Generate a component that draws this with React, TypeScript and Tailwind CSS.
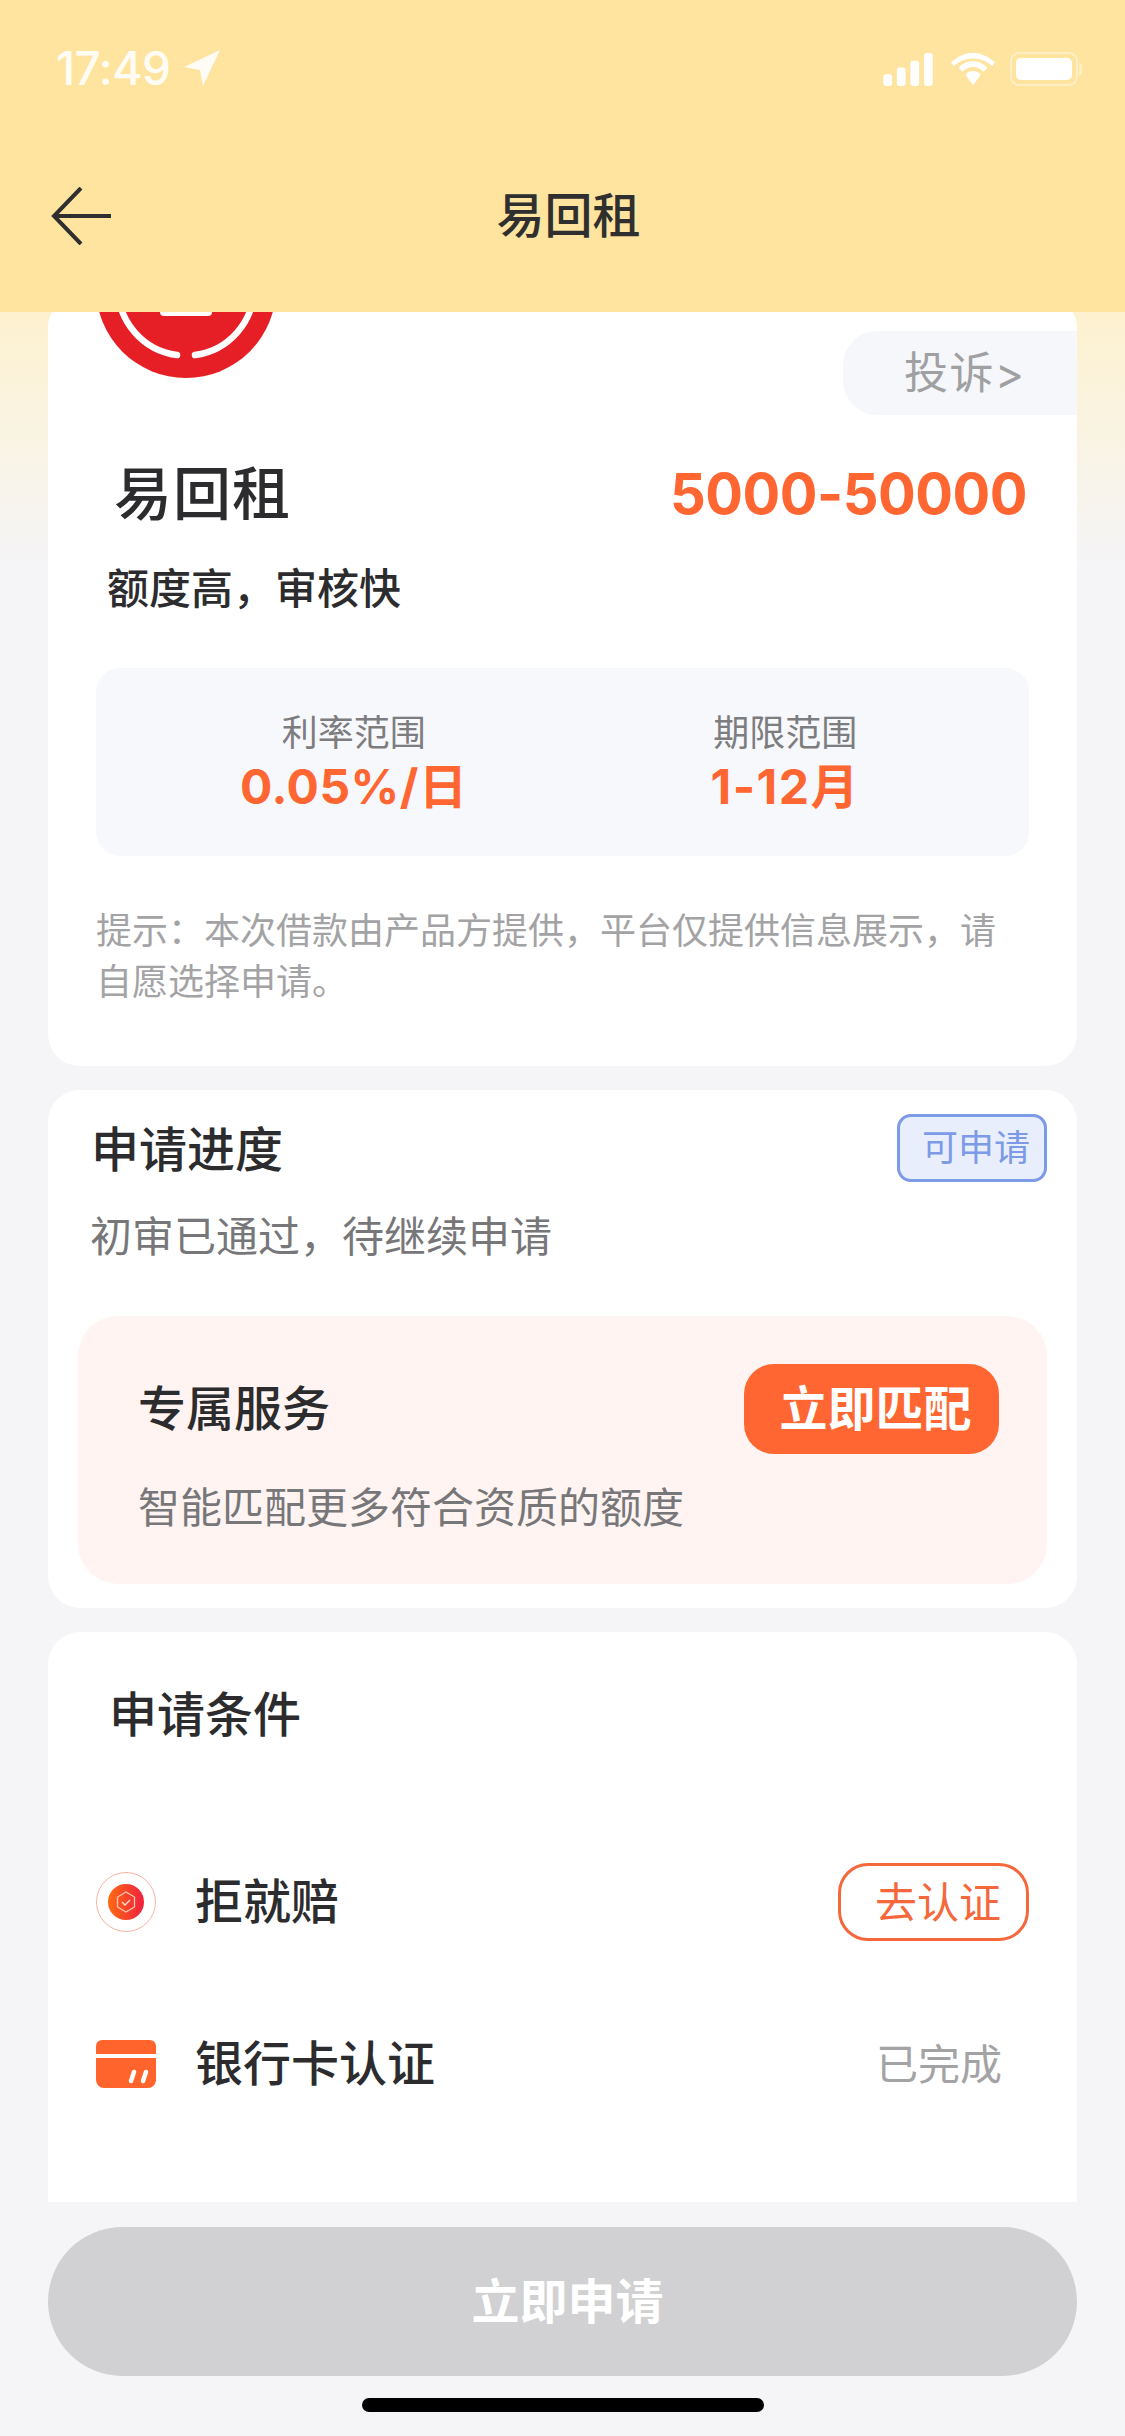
import React from "react";

const FONT = "font-['Inter','Noto_Sans_CJK_SC',sans-serif]";

function StatusBar() {
  return (
    <div className="flex h-[130px] items-start justify-between pl-[56px] pr-[43px] pt-[44px]">
      <div className="flex items-center gap-[13px]">
        <span className="text-[46px] leading-[48px] font-medium tracking-[-0.5px] text-white/90">17:49</span>
        <svg width="38" height="38" viewBox="0 0 36 36" className="text-white/90">
          <path d="M35 1 L1 17 L16 20 L19 35 Z" fill="currentColor" />
        </svg>
      </div>
      <div className="flex items-center gap-[15px] pt-[8px] text-white">
        <svg width="55" height="33" viewBox="0 0 52 34" fill="currentColor">
          <rect x="0" y="22" width="9" height="12" rx="2.5" />
          <rect x="14" y="15" width="9" height="19" rx="2.5" />
          <rect x="28" y="8" width="9" height="26" rx="2.5" />
          <rect x="42" y="0" width="9" height="34" rx="2.5" />
        </svg>
        <svg width="44" height="34" viewBox="0 0 46 34" fill="currentColor">
          <path d="M23 6 C31 6 38 9 43 14 L46 10 C39 4 31 0 23 0 C15 0 7 4 0 10 L3 14 C8 9 15 6 23 6 Z" />
          <path d="M23 15 C27 15 31 17 34 20 L38 16 C34 11 29 9 23 9 C17 9 12 11 8 16 L12 20 C15 17 19 15 23 15 Z" />
          <path d="M23 19 C20 19 17 20 15 23 L23 34 L31 23 C29 20 26 19 23 19 Z" />
        </svg>
        <div className="flex items-center">
          <div className="flex h-[34px] w-[68px] items-center rounded-[9px] border-2 border-white/40 p-[4px]">
            <div className="h-full w-full rounded-[5px] bg-white" />
          </div>
          <div className="ml-[1px] h-[12px] w-[3px] rounded-r-full bg-white/40" />
        </div>
      </div>
    </div>
  );
}

function NavBar() {
  return (
    <div className="relative flex h-[182px] items-start justify-center pl-[12px] pt-[54px]">
      <svg
        width="60"
        height="58"
        viewBox="0 0 60 58"
        fill="none"
        stroke="#2f2f2f"
        strokeWidth="4"
        className="absolute left-[51px] top-[57px]"
      >
        <path d="M30 1 L3 29 L30 57" />
        <path d="M3 29 H60" />
      </svg>
      <span className="text-[48px] leading-[64px] font-medium text-[#2f2f2f]">易回租</span>
    </div>
  );
}

function BrandLogo() {
  return (
    <svg width="180" height="180" viewBox="0 0 180 180">
      <circle cx="90" cy="90" r="90" fill="#e61f26" />
      <path
        d="M81 157 A68 68 0 0 1 22 90 M99 157 A68 68 0 0 0 158 90"
        fill="none"
        stroke="#ffffff"
        strokeWidth="6.5"
        strokeLinecap="round"
      />
      <rect x="64" y="40" width="52" height="78" rx="4" fill="#ffffff" />
    </svg>
  );
}

function ProductCard() {
  return (
    <section className="relative overflow-hidden rounded-b-[32px] rounded-t-[24px] bg-white pb-[58px]">
      <div className="flex h-[155px] items-start pl-[48px]">
        <div className="-mt-[104px]">
          <BrandLogo />
        </div>
      </div>
      <div className="absolute right-0 top-[29px] flex h-[84px] w-[234px] items-center rounded-l-[34px] bg-[#f6f7fb] pl-[61px] text-[44px] tracking-[1.5px] text-[#a0a0a2]">
        投诉&gt;
      </div>
      <div className="mt-[-5px] flex items-center justify-between pl-[66px] pr-[50px]">
        <h2 className="text-[58px] leading-[84px] font-medium tracking-[1px] text-[#2c2c2e]">易回租</h2>
        <span className="text-[56px] leading-[84px] font-bold tracking-[-0.5px] text-[#ff6632]">5000-50000</span>
      </div>
      <p className="mt-[23px] pl-[59px] text-[42px] leading-[60px] font-medium text-[#2c2c2e]">额度高，审核快</p>
      <div className="mx-[48px] mt-[49px] grid h-[188px] grid-cols-2 items-center rounded-[24px] bg-[#f7f8fc] pl-[42px] pr-[28px]">
        <div className="flex flex-col items-center">
          <span className="text-[36px] leading-[50px] text-[#7d7d7f]">利率范围</span>
          <span className="text-[48px] leading-[58px] font-bold tracking-[0.5px] text-[#ff6632]">0.05%/日</span>
        </div>
        <div className="flex flex-col items-center">
          <span className="text-[36px] leading-[50px] text-[#7d7d7f]">期限范围</span>
          <span className="text-[48px] leading-[58px] font-bold tracking-[1.5px] text-[#ff6632]">1-12月</span>
        </div>
      </div>
      <p className="mx-[48px] mt-[50px] text-[36px] leading-[51px] text-[#a3a3a5]">
        提示：本次借款由产品方提供，平台仅提供信息展示，请自愿选择申请。
      </p>
    </section>
  );
}

function ProgressCard() {
  return (
    <section className="relative rounded-[32px] bg-white px-[30px] pb-[24px] pt-[28px]">
      <span className="absolute right-[30px] top-[24px] flex h-[68px] w-[150px] items-center justify-end rounded-[14px] border-[3px] border-[#7c9ae6] bg-[#e8eefc] pr-[14px] text-[36px] text-[#7c9ae6]">
        可申请
      </span>
      <h3 className="pl-[13px] text-[48px] leading-[64px] font-medium text-[#2c2c2e]">申请进度</h3>
      <p className="mt-[25px] pl-[12px] text-[42px] leading-[60px] text-[#77777a]">初审已通过，待继续申请</p>
      <div className="mt-[49px] rounded-[40px] bg-[#fff4f1] pb-[46px] pl-[60px] pr-[48px] pt-[48px]">
        <div className="flex items-center justify-between">
          <span className="text-[48px] leading-[88px] font-medium text-[#2c2c2e]">专属服务</span>
          <span className="flex h-[90px] w-[255px] items-center justify-center rounded-[30px] bg-[#ff6632] pl-[8px] text-[48px] font-bold text-white">
            立即匹配
          </span>
        </div>
        <p className="mt-[24px] text-[42px] leading-[60px] text-[#77777a]">智能匹配更多符合资质的额度</p>
      </div>
    </section>
  );
}

function ShieldBadge() {
  return (
    <svg width="60" height="60" viewBox="0 0 60 60">
      <defs>
        <linearGradient id="badge-fill" x1="0" y1="0" x2="1" y2="0">
          <stop offset="0" stopColor="#ff6a13" />
          <stop offset="1" stopColor="#f0203e" />
        </linearGradient>
      </defs>
      <circle cx="30" cy="30" r="29.5" fill="#fff" stroke="#f6b3a4" strokeWidth="1" />
      <circle cx="30" cy="30" r="18" fill="url(#badge-fill)" />
      <path d="M30 20 L38.5 25 V35 L30 40 L21.5 35 V25 Z" fill="none" stroke="#ffc9b0" strokeWidth="1.3" />
      <path d="M26 30 L29 33 L34 28" fill="none" stroke="#ffe3d4" strokeWidth="1.4" />
    </svg>
  );
}

function CardBadge() {
  return (
    <svg width="60" height="48" viewBox="0 0 60 48">
      <path d="M6 0 H54 A6 6 0 0 1 60 6 V14 H0 V6 A6 6 0 0 1 6 0 Z" fill="#ff642c" />
      <path d="M0 18 H60 V40 A8 8 0 0 1 52 48 H8 A8 8 0 0 1 0 40 Z" fill="#ff642c" />
      <path d="M35 41 L38 32 M47 41 L50 32" stroke="#fff" strokeWidth="4.5" strokeLinecap="round" />
    </svg>
  );
}

function ConditionsCard() {
  return (
    <section className="rounded-t-[32px] bg-white pb-[160px] pt-[51px]">
      <h3 className="pl-[61px] text-[48px] leading-[64px] font-medium text-[#2c2c2e]">申请条件</h3>
      <div className="mt-[113px] flex h-[84px] items-center pl-[48px] pr-[48px]">
        <ShieldBadge />
        <span className="ml-[39px] flex-1 text-[48px] font-medium text-[#2c2c2e]">拒就赔</span>
        <span className="flex h-[78px] w-[191px] items-center justify-center rounded-[30px] border-[3px] border-[#f4683c] pl-[9px] text-[42px] text-[#f4683c]">
          去认证
        </span>
      </div>
      <div className="mt-[78px] flex h-[84px] items-center pl-[48px] pr-[75px]">
        <CardBadge />
        <span className="ml-[39px] flex-1 text-[48px] font-medium text-[#2c2c2e]">银行卡认证</span>
        <span className="text-[42px] text-[#a3a3a5]">已完成</span>
      </div>
    </section>
  );
}

export default function App() {
  return (
    <div className={`${FONT} relative flex h-[2436px] w-[1125px] flex-col overflow-hidden bg-[#f5f5f8]`}>
      <header className="z-10 shrink-0 bg-[#ffe49f]">
        <StatusBar />
        <NavBar />
      </header>
      <main className="flex min-h-0 flex-1 flex-col gap-[24px] overflow-hidden bg-gradient-to-b from-[#fdf1cf] to-[#f5f5f8] to-[260px] px-[48px]">
        <div className="-mt-[10px]">
          <ProductCard />
        </div>
        <ProgressCard />
        <ConditionsCard />
      </main>
      <footer className="shrink-0 bg-[#f5f5f8] px-[48px] pb-[60px] pt-[25px]">
        <button className="h-[149px] w-full rounded-full bg-[#d1d1d3] pl-[10px] text-[48px] font-bold text-white">立即申请</button>
      </footer>
      <div className="absolute bottom-[24px] left-[362px] h-[14px] w-[402px] rounded-full bg-black" />
    </div>
  );
}
